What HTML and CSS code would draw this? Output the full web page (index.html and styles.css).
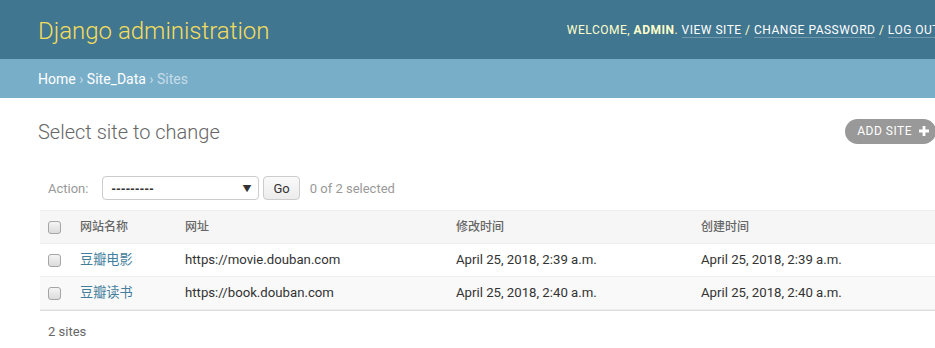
FILE: index.html
```html
<!DOCTYPE html>
<html lang="zh">
<head>
    <meta charset="UTF-8">
    <title>Select site to change | Django site admin</title>
    <link rel="stylesheet" href="styles.css">
</head>
<body>
<div class="page">

    <div class="header">
        <h1 class="branding">Django administration</h1>
        <div class="user-tools">
            Welcome, <strong>admin</strong>.
            <a href="#">View site</a> /
            <a href="#">Change password</a> /
            <a href="#">Log out</a>
        </div>
    </div>

    <div class="breadcrumbs">
        <a href="#">Home</a> &rsaquo; <a href="#">Site_Data</a> &rsaquo; Sites
    </div>

    <div class="content">
        <div class="title-row">
            <h1>Select site to change</h1>
            <a href="#" class="addlink">Add site
                <svg width="10" height="10" viewBox="0 0 10 10"><path d="M3.6 0h2.8v3.6H10v2.8H6.4V10H3.6V6.4H0V3.6h3.6z" fill="#fff"/></svg>
            </a>
        </div>

        <div class="actions">
            <label for="action">Action:</label>
            <span class="select-wrap">
                <select id="action">
                    <option>---------</option>
                    <option>Delete selected sites</option>
                </select>
            </span>
            <button class="go-button">Go</button>
            <span class="counter">0 of 2 selected</span>
        </div>

        <table class="results">
            <colgroup>
                <col style="width: 30px">
                <col style="width: 105px">
                <col style="width: 271px">
                <col style="width: 245px">
                <col>
            </colgroup>
            <thead>
                <tr>
                    <th class="check"><input type="checkbox" class="box"></th>
                    <th>网站名称</th>
                    <th>网址</th>
                    <th>修改时间</th>
                    <th>创建时间</th>
                </tr>
            </thead>
            <tbody>
                <tr>
                    <td class="check"><input type="checkbox" class="box"></td>
                    <td><a href="#">豆瓣电影</a></td>
                    <td>https://movie.douban.com</td>
                    <td>April 25, 2018, 2:39 a.m.</td>
                    <td>April 25, 2018, 2:39 a.m.</td>
                </tr>
                <tr class="row2">
                    <td class="check"><input type="checkbox" class="box"></td>
                    <td><a href="#">豆瓣读书</a></td>
                    <td>https://book.douban.com</td>
                    <td>April 25, 2018, 2:40 a.m.</td>
                    <td>April 25, 2018, 2:40 a.m.</td>
                </tr>
            </tbody>
        </table>

        <p class="paginator">2 sites</p>
    </div>

</div>
</body>
</html>
```

FILE: styles.css
```css
html, body {
    overflow: hidden;
}

body {
    margin: 0;
    font-family: Roboto, "Noto Sans CJK SC", sans-serif;
    font-size: 14px;
    color: #333;
    background: #fff;
}

a {
    text-decoration: none;
}

.page {
    width: 980px;
}

/* header */

.header {
    display: flex;
    align-items: center;
    justify-content: space-between;
    height: 59px;
    padding: 0 40px 0 38px;
    background: #417690;
}

.branding {
    margin: 3px 0 0;
    font-size: 24px;
    font-weight: 300;
    color: #f5dd5d;
}

.user-tools {
    margin-top: 1px;
    font-size: 12px;
    letter-spacing: 0.5px;
    text-transform: uppercase;
    color: #ffc;
}

.user-tools strong {
    font-weight: 700;
}

.user-tools a {
    color: #fff;
    border-bottom: 1px solid rgba(255, 255, 255, 0.25);
}

.breadcrumbs {
    height: 39px;
    line-height: 40px;
    padding: 0 40px 0 38px;
    background: #79aec8;
    color: #c4dce8;
    font-size: 14px;
}

.breadcrumbs a {
    color: #fff;
}

/* content */

.content {
    padding: 20px 40px;
}

.title-row {
    display: flex;
    align-items: center;
    justify-content: space-between;
    height: 28px;
    margin-bottom: 20px;
}

.title-row h1 {
    margin: 0 0 0 -2px;
    font-size: 20px;
    font-weight: 300;
    color: #666;
}

.addlink {
    display: flex;
    align-items: center;
    gap: 7px;
    height: 25px;
    margin: -2px 4px 0 0;
    padding: 0 7px 0 12px;
    border-radius: 15px;
    background: #999;
    color: #fff;
    font-size: 12px;
    letter-spacing: 0.5px;
    text-transform: uppercase;
}

.actions {
    display: flex;
    align-items: center;
    height: 24px;
    padding: 10px 8px;
    font-size: 13px;
    color: #999;
}

.actions label {
    margin-right: 14px;
}

.select-wrap {
    position: relative;
}

.select-wrap::after {
    content: "\25BC";
    position: absolute;
    right: 8px;
    top: 6px;
    font-size: 9px;
    color: #333;
    pointer-events: none;
}

.select-wrap select {
    appearance: none;
    -webkit-appearance: none;
    width: 157px;
    height: 24px;
    padding: 0 8px;
    border: 1px solid #ccc;
    border-radius: 4px;
    background: #fff;
    font-family: "Liberation Sans", Arial, sans-serif;
    font-size: 13px;
    font-weight: 700;
    letter-spacing: 0.4px;
    color: #333;
}

.go-button {
    height: 24px;
    margin-left: 4px;
    padding: 0 9px;
    border: 1px solid #ccc;
    border-radius: 4px;
    background: linear-gradient(#fafafa, #ececec);
    font-family: Roboto, sans-serif;
    font-size: 13px;
    color: #333;
}

.counter {
    margin-left: 10px;
}

/* results table */

.results {
    width: 900px;
    table-layout: fixed;
    border-collapse: collapse;
    font-size: 13px;
    line-height: 16px;
}

.results th,
.results td {
    padding: 8px 10px;
    text-align: left;
    vertical-align: middle;
    border-bottom: 1px solid #eee;
    white-space: nowrap;
}

.results thead th {
    border-top: 1px solid #eee;
    background: #f6f6f6;
    color: #666;
    font-size: 12px;
    font-weight: 500;
}

.results td {
    font-size: 13.2px;
}

.results .check {
    padding: 8px 0 8px 8px;
    text-align: left;
}

.results a {
    color: #447e9b;
}

.results .row2 td {
    background: #f9f9f9;
}

.box {
    -webkit-appearance: none;
    appearance: none;
    display: block;
    width: 13px;
    height: 13px;
    margin: 0;
    border: 1px solid #a5a5a5;
    border-radius: 3px;
    background: linear-gradient(#f4f4f4, #dcdcdc);
}

.paginator {
    margin: 0;
    padding: 10px 8px;
    line-height: 22px;
    border-top: 1px solid #ddd;
    font-size: 13px;
    color: #666;
}
```
